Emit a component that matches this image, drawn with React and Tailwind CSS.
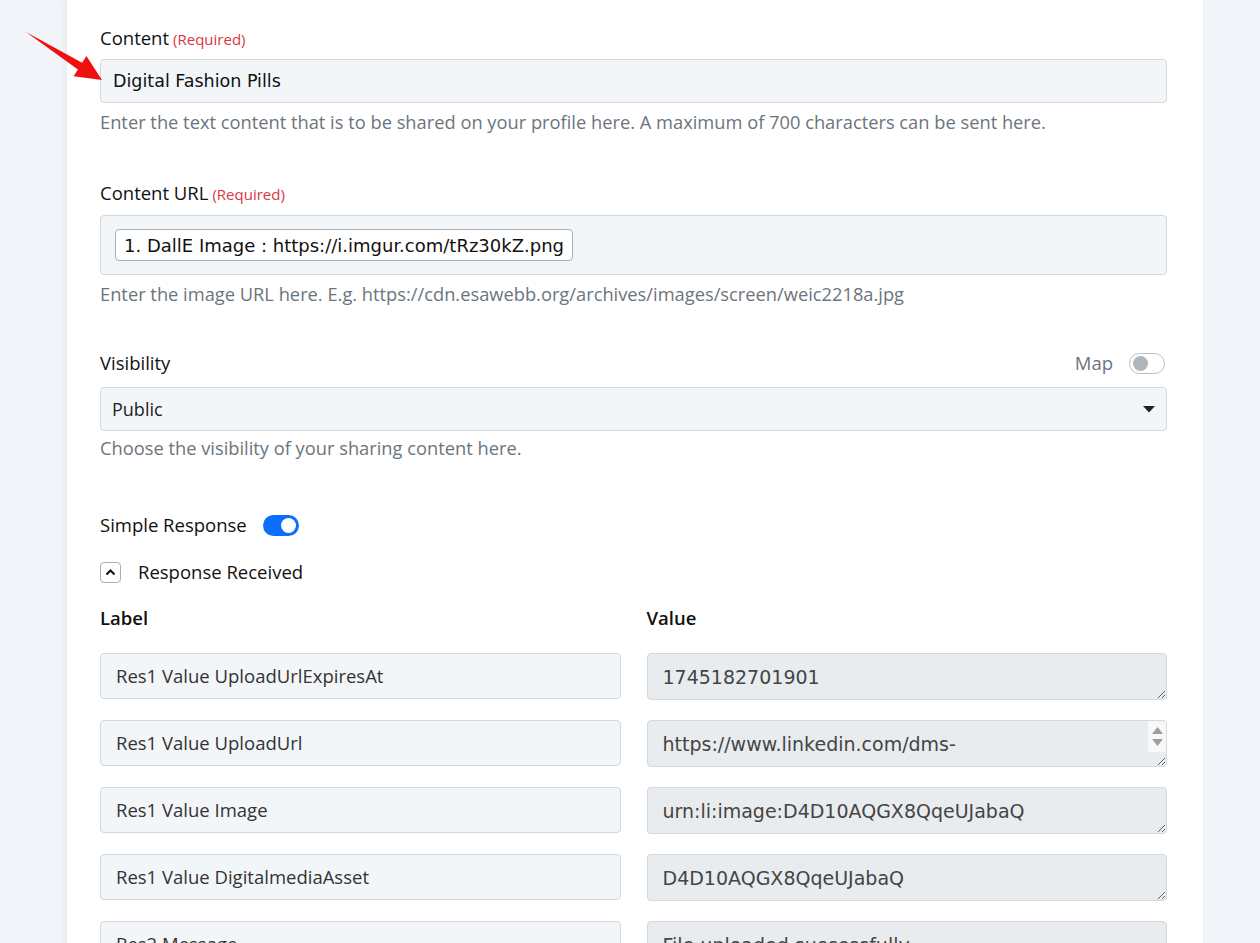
import React from "react";

const ROWS = [
  ["Res1 Value UploadUrlExpiresAt", "1745182701901"],
  [
    "Res1 Value UploadUrl",
    "https://www.linkedin.com/dms-uploads/sp/v2/D4D10AQGX8QqeUJabaQ/uploadedImage/0?ca=vector_feedshare&cn=uploads&iri=B01-77&sync=0&v=beta&ut=0Yd_xLmWkqOb81",
  ],
  ["Res1 Value Image", "urn:li:image:D4D10AQGX8QqeUJabaQ"],
  ["Res1 Value DigitalmediaAsset", "D4D10AQGX8QqeUJabaQ"],
  ["Res2 Message", "File uploaded successfully"],
];

function Label({ children, required }) {
  return (
    <div className="flex items-baseline h-6 text-[18.5px] leading-6 text-[#111]">
      <span>{children}</span>
      {required ? <span className="ml-1 text-[15px] leading-6 text-[#dc3545]">(Required)</span> : null}
    </div>
  );
}

function Help({ children, className = "" }) {
  return <div className={"text-[18.3px] leading-6 text-[#6c757d] " + className}>{children}</div>;
}

function Toggle({ on }) {
  return on ? (
    <div className="flex h-[21px] w-[36px] items-center justify-end rounded-full bg-[#0d6efd] px-[3px]">
      <div className="h-[15px] w-[15px] rounded-full bg-white" />
    </div>
  ) : (
    <div className="flex h-[21px] w-[36px] items-center rounded-full border border-[#b8bec5] bg-white px-[3px]">
      <div className="h-[15px] w-[15px] rounded-full bg-[#adb5bd]" />
    </div>
  );
}

const VERDANA = { fontFamily: "'DejaVu Sans', Verdana, sans-serif" };

export default function App() {
  return (
    <div
      className="relative h-[943px] overflow-hidden bg-[#f1f4f8]"
      style={{ fontFamily: "'Open Sans', 'Noto Sans', sans-serif" }}
    >
      <svg className="absolute left-0 top-0 z-10" width="120" height="100" viewBox="0 0 120 100">
        <polygon points="26,32 82.1,62.7 86.4,56 102,80 73.6,76.2 77.9,69.5" fill="#f01010" />
      </svg>

      <div className="ml-[67px] w-[1136px] min-h-full bg-white pl-[33px] pr-[36px] pt-[26px] shadow-[-2px_0_6px_rgba(0,0,0,0.05)]">
        <Label required>Content</Label>
        <div
          className="mt-[9px] flex h-[44px] items-center rounded border border-[#d3d8de] bg-[#f3f6f9] px-3 text-[#111]"
          style={{ ...VERDANA, fontSize: "17.5px" }}
        >
          Digital Fashion Pills
        </div>
        <Help className="mt-[7px]">
          Enter the text content that is to be shared on your profile here. A maximum of 700 characters can be sent here.
        </Help>

        <div className="mt-[47px]">
          <Label required>Content URL</Label>
        </div>
        <div className="mt-[10px] flex h-[60px] items-center rounded border border-[#d3d8de] bg-[#f3f6f9] px-[14px]">
          <span
            className="flex h-[32px] items-center rounded border border-[#a9afb6] bg-white px-2 text-[#111]"
            style={{ ...VERDANA, fontSize: "18px" }}
          >
            1. DallE Image : https://i.imgur.com/tRz30kZ.png
          </span>
        </div>
        <Help className="mt-[7px]">Enter the image URL here. E.g. https://cdn.esawebb.org/archives/images/screen/weic2218a.jpg</Help>

        <div className="mt-[45px] flex h-6 items-center justify-between">
          <Label>Visibility</Label>
          <div className="flex items-center gap-[16px] pr-[2px]">
            <span className="text-[18.5px] leading-6 text-[#6c757d]">Map</span>
            <Toggle on={false} />
          </div>
        </div>
        <div className="mt-[12px] flex h-[44px] items-center justify-between rounded border border-[#d3d8de] bg-[#f3f6f9] pl-[11px] pr-[11px] text-[18px] text-[#222]">
          <span>Public</span>
          <svg width="12" height="7" viewBox="0 0 12 7">
            <polygon points="0,0 12,0 6,6.5" fill="#222" />
          </svg>
        </div>
        <Help className="mt-[5px]">Choose the visibility of your sharing content here.</Help>

        <div className="mt-[53px] flex h-6 items-center gap-[16px]">
          <span className="text-[18.5px] leading-6 text-[#111]">Simple Response</span>
          <Toggle on />
        </div>

        <div className="mt-[23px] flex h-6 items-center gap-[17px]">
          <div className="flex h-[21px] w-[21px] items-center justify-center rounded border border-[#a9afb6]">
            <svg width="11" height="8" viewBox="0 0 11 8">
              <path d="M1.5 6.5 L5.5 2.5 L9.5 6.5" fill="none" stroke="#111" strokeWidth="2" />
            </svg>
          </div>
          <span className="text-[18.5px] leading-6 text-[#111]">Response Received</span>
        </div>

        <div className="mt-[22px] grid grid-cols-2 gap-x-[26px]">
          <div className="text-[18.5px] font-semibold leading-6 text-[#111]">Label</div>
          <div className="text-[18.5px] font-semibold leading-6 text-[#111]">Value</div>
        </div>

        <div className="mt-[23px] grid grid-cols-2 gap-x-[26px] gap-y-[20px]">
          {ROWS.map(([label, value], i) => (
            <React.Fragment key={label}>
              <div className="flex h-[46px] items-center rounded border border-[#d3d8de] bg-[#f3f6f9] px-[15px] text-[18.5px] leading-6 text-[#333]">
                {label}
              </div>
              <div className="relative">
                <textarea
                  readOnly
                  rows={1}
                  value={value}
                  className="block h-[47px] w-full resize-y overflow-hidden rounded border border-[#d3d8de] bg-[#e9ecef] py-[6px] pl-[15px] pr-[22px] text-[#444] outline-none"
                  style={{ ...VERDANA, fontSize: "19px", lineHeight: "34px" }}
                />
                {i === 1 ? (
                  <div className="absolute right-[1px] top-[1px] flex h-[31px] w-[18px] flex-col items-center justify-center gap-[5px] rounded-tr bg-[#f8f8f8]">
                    <svg width="11" height="7" viewBox="0 0 11 7">
                      <polygon points="0,7 11,7 5.5,0" fill="#9e9e9e" />
                    </svg>
                    <svg width="11" height="7" viewBox="0 0 11 7">
                      <polygon points="0,0 11,0 5.5,7" fill="#9e9e9e" />
                    </svg>
                  </div>
                ) : null}
              </div>
            </React.Fragment>
          ))}
        </div>
      </div>
    </div>
  );
}
